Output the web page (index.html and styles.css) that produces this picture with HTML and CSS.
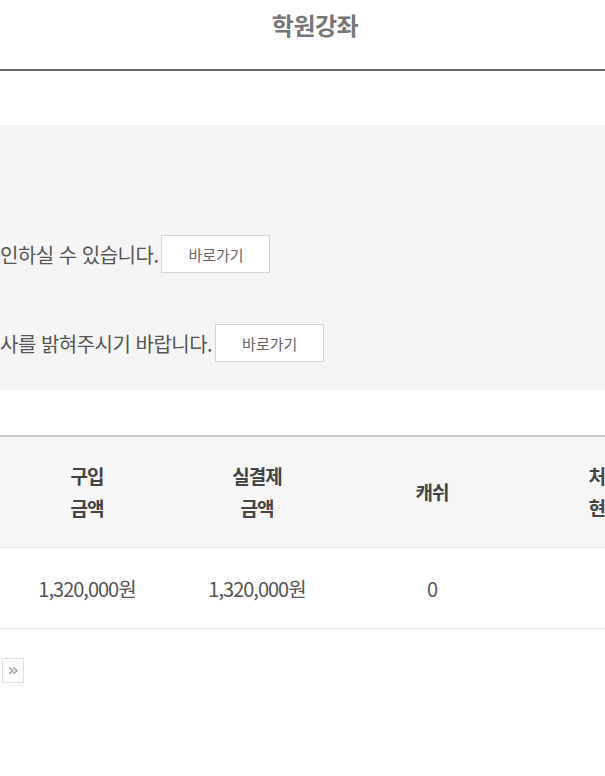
FILE: index.html
```html
<!DOCTYPE html>
<html lang="ko">
<head>
<meta charset="utf-8">
<title>학원강좌</title>
<link rel="stylesheet" href="styles.css">
</head>
<body>
<div class="page">
  <header class="top">
    <h1 class="title">학원강좌</h1>
  </header>

  <section class="notice">
    <div class="notice-row">
      <p class="notice-text">인하실 수 있습니다.</p>
      <a class="go-btn" href="#">바로가기</a>
    </div>
    <div class="notice-row">
      <p class="notice-text">사를 밝혀주시기 바랍니다.</p>
      <a class="go-btn" href="#">바로가기</a>
    </div>
  </section>

  <div class="list">
    <div class="list-head">
      <div class="cell">구입<br>금액</div>
      <div class="cell">실결제<br>금액</div>
      <div class="cell">캐쉬</div>
      <div class="cell">처리<br>현황</div>
    </div>
    <div class="list-row">
      <div class="cell">1,320,000원</div>
      <div class="cell">1,320,000원</div>
      <div class="cell">0</div>
      <div class="cell"></div>
    </div>
  </div>

  <nav class="pager">
    <a class="pager-btn" href="#">&raquo;</a>
  </nav>
</div>
</body>
</html>
```

FILE: styles.css
```css
* { box-sizing: border-box; }

html, body {
  margin: 0;
  padding: 0;
  background: #ffffff;
}

body {
  width: 605px;
  height: 776px;
  overflow: hidden;
  font-family: "Noto Sans CJK KR", "Noto Sans", sans-serif;
  color: #555;
}

.page {
  width: 700px;
}

.top {
  width: 605px;
  height: 71px;
  border-bottom: 2px solid #666;
  display: flex;
  justify-content: center;
  padding-top: 8px;
}

.title {
  margin: 0 0 0 25px;
  font-size: 24px;
  font-weight: 700;
  letter-spacing: -0.5px;
  line-height: 34px;
  color: #777;
}

.notice {
  margin-top: 54px;
  width: 605px;
  height: 265px;
  background: #f5f5f5;
  padding-top: 110px;
  display: flex;
  flex-direction: column;
  gap: 51px;
}

.notice-row {
  display: flex;
  align-items: center;
  gap: 3px;
  height: 38px;
}

.notice-text {
  margin: 0;
  font-size: 20px;
  letter-spacing: -0.5px;
  color: #555;
  white-space: nowrap;
}

.go-btn {
  display: flex;
  align-items: center;
  justify-content: center;
  width: 109px;
  height: 38px;
  background: #fff;
  border: 1px solid #d4d4d4;
  font-size: 15px;
  color: #666;
  text-decoration: none;
  letter-spacing: 0;
}

.list {
  margin-top: 45px;
  width: 700px;
}

.list-head,
.list-row {
  display: grid;
  grid-template-columns: 174px 166px 184px 162px;
}

.list-head {
  height: 113px;
  background: #f6f6f6;
  border-top: 2px solid #c8c8c8;
  border-bottom: 1px solid #e6e2e6;
  font-size: 19px;
  font-weight: 700;
  color: #444;
  line-height: 32px;
  letter-spacing: -1px;
}

.list-row {
  height: 81px;
  border-bottom: 1px solid #e6e6e6;
  font-size: 20px;
  color: #555;
  letter-spacing: -1px;
}

.cell {
  display: flex;
  align-items: center;
  justify-content: center;
  text-align: center;
}

.pager {
  margin-top: 29px;
  padding-left: 2px;
  display: flex;
}

.pager-btn {
  display: flex;
  align-items: center;
  justify-content: center;
  width: 22px;
  height: 25px;
  border: 1px solid #e0e0e0;
  font-family: "DejaVu Sans", sans-serif;
  font-size: 18px;
  font-weight: 700;
  color: #aaa;
  text-decoration: none;
  line-height: 1;
  padding-bottom: 2px;
}
```
